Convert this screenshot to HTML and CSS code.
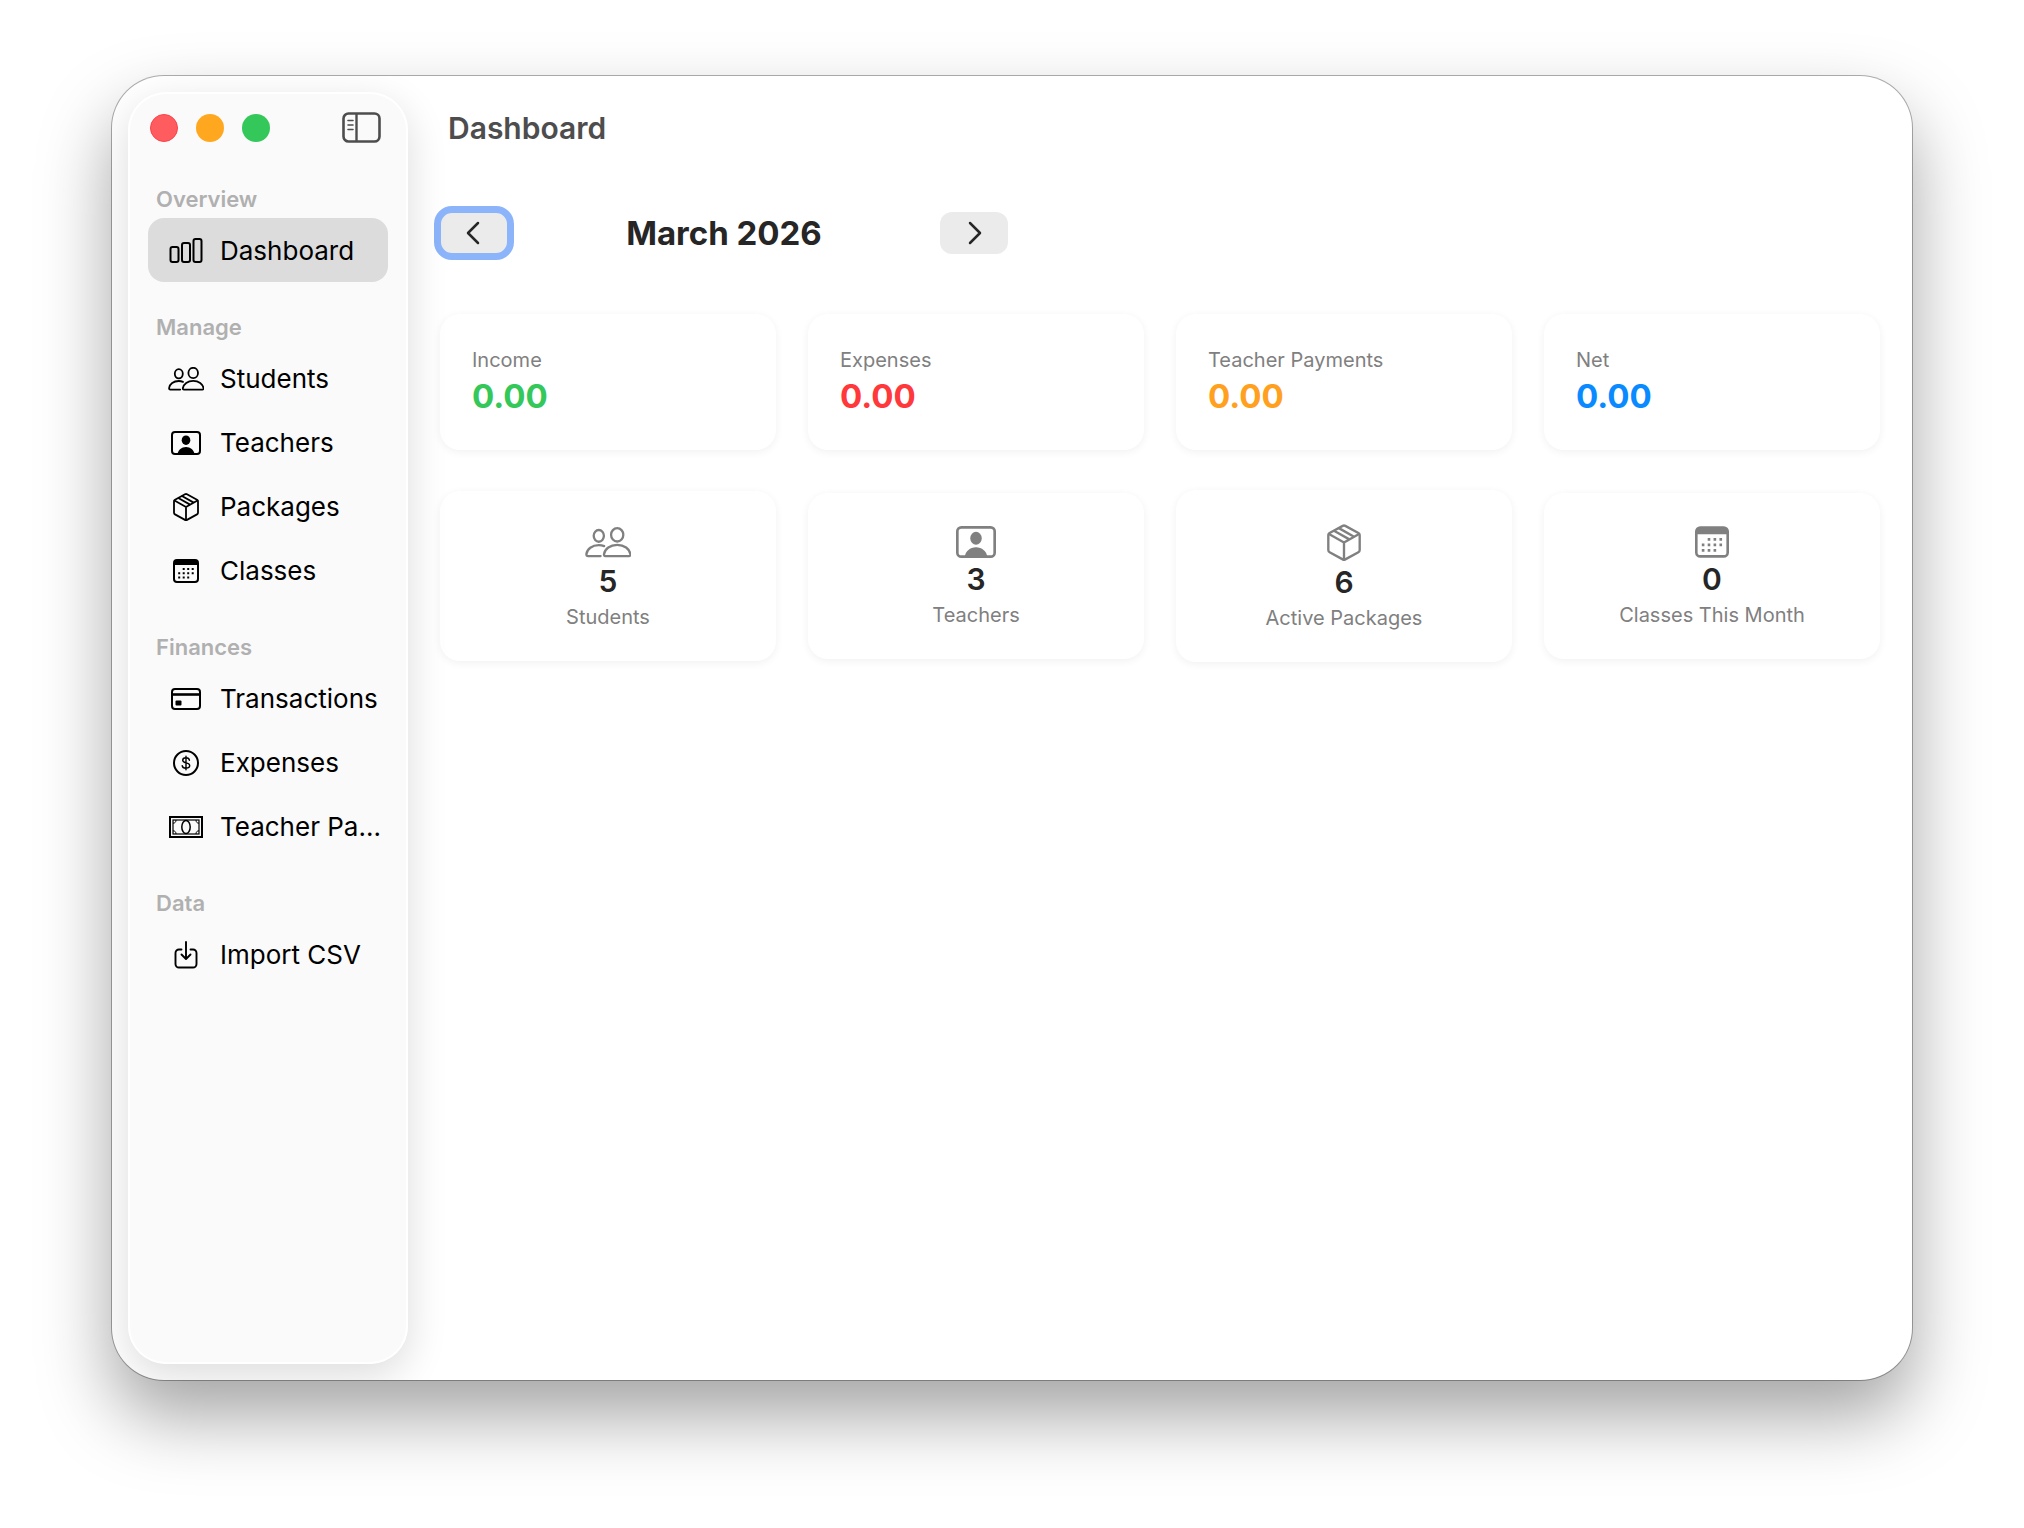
FILE: index.html
```html
<!doctype html>
<html lang="en">
  <head>
    <meta charset="UTF-8" />
    <meta name="viewport" content="width=device-width, initial-scale=1.0" />
    <title>Dashboard</title>
    <link rel="stylesheet" href="styles.css">
  </head>
  <body>
    <!-- shared icons -->
    <svg class="sprite" aria-hidden="true">
      <symbol id="icon-students" viewBox="0 0 36 24">
        <g fill="none" stroke="currentColor" stroke-width="1.8" stroke-linejoin="round" stroke-linecap="round">
          <ellipse cx="10.8" cy="6.8" rx="4" ry="4.6" />
          <ellipse cx="25.2" cy="6" rx="4.8" ry="5.2" />
          <path d="M12.2 22.6H2.4C1.4 22.6 1 22 1.1 21c.5-3.8 4.4-7 9.7-7 1.6 0 3 .3 4.2.8" />
          <path d="M16 22.6h18.4c.9 0 1.3-.6 1.1-1.6-.7-3.9-4.7-7.2-10.3-7.2S15.6 17.1 14.9 21c-.2 1 .2 1.6 1.1 1.6z" />
        </g>
      </symbol>
      <symbol id="icon-teachers" viewBox="0 0 30 24">
        <rect x="1" y="1" width="28" height="22" rx="3" fill="none" stroke="currentColor" stroke-width="2" />
        <ellipse cx="15" cy="9.2" rx="4.300" ry="4.800" fill="currentColor" />
        <path d="M6.500 23c.7-4 4-7 8.500-7s7.800 3 8.500 7z" fill="currentColor" />
      </symbol>
      <symbol id="icon-packages" viewBox="0 0 26 28">
        <g fill="none" stroke="currentColor" stroke-width="1.8" stroke-linejoin="round" stroke-linecap="round">
          <path d="M12 1.300a2 2 0 0 1 2 0l10 5.500a2 2 0 0 1 1 1.700v11.200a2 2 0 0 1-1 1.700l-10 5.500a2 2 0 0 1-2 0L2 21.400a2 2 0 0 1-1-1.700V8.500a2 2 0 0 1 1-1.700z" />
          <path d="M1.500 7.500L13 14l11.500-6.500M13 14v12.800M5.700 5.200l11.400 6.400M9.400 3.200l11.300 6.400" />
        </g>
      </symbol>
      <symbol id="icon-classes" viewBox="0 0 26 24">
        <rect x="1" y="1" width="24" height="22" rx="3" fill="none" stroke="currentColor" stroke-width="2" />
        <path d="M1 6V4a3 3 0 0 1 3-3h18a3 3 0 0 1 3 3v2z" fill="currentColor" />
        <path d="M9.700 10h2M14.200 10h2M18.700 10h2M5.200 14.200h2M9.700 14.200h2M14.200 14.200h2M18.700 14.200h2M5.200 18.400h2M9.700 18.400h2M14.200 18.400h2" stroke="currentColor" stroke-width="2" />
      </symbol>
    </svg>

    <div class="window">
      <aside class="sidebar">
        <div class="titlebar">
          <div class="lights">
            <button class="light red" aria-label="Close"></button>
            <button class="light yellow" aria-label="Minimize"></button>
            <button class="light green" aria-label="Zoom"></button>
          </div>
          <button class="toggle" aria-label="Toggle sidebar">
            <svg width="40" height="32" viewBox="0 0 40 32" fill="none" stroke="currentColor">
              <rect x="1.500" y="1.500" width="36" height="28" rx="5" stroke-width="2.600" />
              <path d="M14.500 2v27" stroke-width="2.400" />
              <path d="M6 8.500h5M6 13h5M6 17.500h5" stroke-width="1.600" stroke-linecap="round" />
            </svg>
          </button>
        </div>

        <nav>
          <h2 class="section">Overview</h2>
          <a class="item active" href="#dashboard">
            <span class="icon">
              <svg width="34" height="26" viewBox="0 0 34 26" fill="none" stroke="currentColor" stroke-width="2">
                <rect x="1.500" y="9" width="8" height="15" rx="2" />
                <rect x="13" y="5" width="8" height="19" rx="2" />
                <rect x="24.500" y="1" width="8" height="23" rx="2" />
              </svg>
            </span>
            <span class="label">Dashboard</span>
          </a>

          <h2 class="section">Manage</h2>
          <a class="item" href="#students">
            <span class="icon"><svg width="36" height="24"><use href="#icon-students" /></svg></span>
            <span class="label">Students</span>
          </a>
          <a class="item" href="#teachers">
            <span class="icon"><svg width="30" height="24"><use href="#icon-teachers" /></svg></span>
            <span class="label">Teachers</span>
          </a>
          <a class="item" href="#packages">
            <span class="icon"><svg width="26" height="28"><use href="#icon-packages" /></svg></span>
            <span class="label">Packages</span>
          </a>
          <a class="item" href="#classes">
            <span class="icon"><svg width="26" height="24"><use href="#icon-classes" /></svg></span>
            <span class="label">Classes</span>
          </a>

          <h2 class="section">Finances</h2>
          <a class="item" href="#transactions">
            <span class="icon">
              <svg width="30" height="22" viewBox="0 0 30 22">
                <rect x="1" y="1" width="28" height="20" rx="3" fill="none" stroke="currentColor" stroke-width="2" />
                <path d="M1 6.500h28" stroke="currentColor" stroke-width="2.600" />
                <rect x="4.500" y="12.500" width="6" height="5" rx="1" fill="currentColor" />
              </svg>
            </span>
            <span class="label">Transactions</span>
          </a>
          <a class="item" href="#expenses">
            <span class="icon">
              <svg width="26" height="26" viewBox="0 0 26 26" fill="none" stroke="currentColor" stroke-linecap="round">
                <circle cx="13" cy="13" r="12" stroke-width="2" />
                <path d="M16.400 10.200c-.2-1.500-1.500-2.400-3.400-2.400s-3.300 1-3.300 2.500c0 3.600 7 1.600 7 5.300 0 1.600-1.500 2.600-3.700 2.600s-3.600-1-3.800-2.600M13 6.300v13.400" stroke-width="1.400" />
              </svg>
            </span>
            <span class="label">Expenses</span>
          </a>
          <a class="item" href="#teacher-payments" title="Teacher Payments">
            <span class="icon">
              <svg width="34" height="22" viewBox="0 0 34 22" fill="none" stroke="currentColor">
                <rect x="1" y="1" width="32" height="20" stroke-width="2" />
                <rect x="4" y="4" width="26" height="14" stroke-width="1.200" />
                <ellipse cx="17" cy="11" rx="4.200" ry="6.500" stroke-width="1.500" />
                <path d="M4 7.200c2 0 3-1.200 3-3.200M30 7.200c-2 0-3-1.200-3-3.200M4 14.800c2 0 3 1.200 3 3.200M30 14.800c-2 0-3 1.200-3 3.200" stroke-width="1" />
              </svg>
            </span>
            <span class="label">Teacher Pa...</span>
          </a>

          <h2 class="section">Data</h2>
          <a class="item" href="#import">
            <span class="icon">
              <svg width="24" height="28" viewBox="0 0 24 28" fill="none" stroke="currentColor" stroke-width="1.900" stroke-linecap="round" stroke-linejoin="round">
                <path d="M7.500 8.500H5a3.500 3.500 0 0 0-3.500 3.500v11A3.500 3.500 0 0 0 5 26.500h14a3.500 3.500 0 0 0 3.500-3.500V12A3.500 3.500 0 0 0 19 8.500h-2.500" />
                <path d="M12 1v16.500M7.500 13.500l4.500 4.500 4.500-4.500" />
              </svg>
            </span>
            <span class="label">Import CSV</span>
          </a>
        </nav>
      </aside>

      <main class="main">
        <header class="header">
          <h1>Dashboard</h1>
        </header>

        <div class="content">
          <div class="month">
            <button class="month-btn focused" aria-label="Previous month">
              <svg width="16" height="24" viewBox="0 0 16 24"><path d="M12 2L2 12l10 10" /></svg>
            </button>
            <h2>March 2026</h2>
            <button class="month-btn" aria-label="Next month">
              <svg width="16" height="24" viewBox="0 0 16 24"><path d="M4 2l10 10L4 22" /></svg>
            </button>
          </div>

          <div class="cards">
            <div class="card">
              <div class="caption">Income</div>
              <div class="amount income">0.00</div>
            </div>
            <div class="card">
              <div class="caption">Expenses</div>
              <div class="amount expenses">0.00</div>
            </div>
            <div class="card">
              <div class="caption">Teacher Payments</div>
              <div class="amount payments">0.00</div>
            </div>
            <div class="card">
              <div class="caption">Net</div>
              <div class="amount net">0.00</div>
            </div>
          </div>

          <div class="cards">
            <div class="card stat">
              <svg width="46" height="38"><use href="#icon-students" y="4" width="46" height="31" /></svg>
              <div class="count">5</div>
              <div class="name">Students</div>
            </div>
            <div class="card stat">
              <svg width="40" height="34"><use href="#icon-teachers" y="1" width="40" height="32" /></svg>
              <div class="count">3</div>
              <div class="name">Teachers</div>
            </div>
            <div class="card stat">
              <svg width="34" height="40"><use href="#icon-packages" y="2" width="34" height="37" /></svg>
              <div class="count">6</div>
              <div class="name">Active Packages</div>
            </div>
            <div class="card stat">
              <svg width="34" height="34"><use href="#icon-classes" y="1" width="34" height="32" /></svg>
              <div class="count">0</div>
              <div class="name">Classes This Month</div>
            </div>
          </div>
        </div>
      </main>
    </div>
  </body>
</html>
```
FILE: styles.css
```css
* {
  box-sizing: border-box;
}
body {
  margin: 0;
  min-height: 100vh;
  padding: 76px 112px 148px;
  display: flex;
  background: #fff;
  color: #262626;
  font-family: Inter, "Liberation Sans", sans-serif;
}
h1, h2 {
  margin: 0;
}
button {
  padding: 0;
  border: none;
  background: none;
  color: inherit;
  font: inherit;
}
svg {
  display: block;
}
.sprite {
  position: absolute;
  width: 0;
  height: 0;
}

.window {
  flex: 1;
  display: flex;
  padding: 16px;
  border-radius: 52px;
  background: #fff;
  overflow: hidden;
  box-shadow: 0 0 0 1px rgba(0, 0, 0, 0.3), 0 36px 72px rgba(0, 0, 0, 0.36);
}

/* sidebar */
.sidebar {
  position: relative;
  z-index: 1;
  flex: 0 0 280px;
  min-width: 0;
  padding: 0 20px;
  border-radius: 38px;
  background: #fafafa;
  box-shadow: inset 0 0 0 2px #fff, 0 12px 40px rgba(0, 0, 0, 0.14);
}
.titlebar {
  display: flex;
  align-items: center;
  justify-content: space-between;
  height: 72px;
  margin-bottom: 16px;
  padding: 0 6px 0 2px;
}
.lights {
  display: flex;
  gap: 18px;
}
.light {
  width: 28px;
  height: 28px;
  border-radius: 50%;
}
.red {
  background: #ff5c60;
  border: 1px solid #fb4248;
}
.yellow {
  background: #ffa81f;
}
.green {
  background: #34c759;
}
.toggle {
  color: #4d4d4d;
}
.section {
  padding-left: 8px;
  color: #b0b0b0;
  font-size: 22px;
  font-weight: 600;
  line-height: 38px;
}
.item + .section {
  margin-top: 26px;
}
.item {
  display: flex;
  align-items: center;
  gap: 16px;
  height: 64px;
  padding: 0 4px 0 20px;
  border-radius: 16px;
  color: #000;
  font-size: 26px;
  text-decoration: none;
}
.active {
  background: #dcdcdc;
}
.icon {
  flex: 0 0 36px;
  display: flex;
  justify-content: center;
  padding-top: 2px;
}
.label {
  overflow: hidden;
  white-space: nowrap;
  text-overflow: ellipsis;
}

/* main area */
.main {
  flex: 1;
  min-width: 0;
  padding: 0 16px 0 32px;
}
.header {
  display: flex;
  align-items: center;
  height: 72px;
  margin-bottom: 48px;
  padding-left: 8px;
}
.header h1 {
  color: #4d4d4d;
  font-size: 30px;
  font-weight: 600;
}
.content {
  display: flex;
  flex-direction: column;
  gap: 40px;
}
.month {
  display: flex;
  align-items: center;
  justify-content: space-between;
  max-width: 568px;
  margin-bottom: 20px;
}
.month h2 {
  font-size: 33px;
  font-weight: 700;
  line-height: 42px;
}
.month-btn {
  display: flex;
  align-items: center;
  justify-content: center;
  width: 68px;
  height: 42px;
  border-radius: 12px;
  background: #ebebeb;
}
.month-btn path {
  fill: none;
  stroke: currentColor;
  stroke-width: 2.5;
  stroke-linecap: round;
  stroke-linejoin: round;
}
.focused {
  outline: 7px solid #8cb4fa;
  outline-offset: -1px;
}
.cards {
  display: grid;
  grid-template-columns: repeat(4, 1fr);
  align-items: center;
  gap: 32px;
}
.card {
  padding: 32px;
  border-radius: 20px;
  background: #fff;
  box-shadow: 0 2px 8px rgba(0, 0, 0, 0.06);
}
.caption {
  color: #808080;
  font-size: 20px;
  line-height: 28px;
}
.amount {
  font-size: 33px;
  font-weight: 700;
  line-height: 44px;
}
.income {
  color: #34c759;
}
.expenses {
  color: #ff383c;
}
.payments {
  color: #ffa01f;
}
.net {
  color: #0a8aff;
}
.stat {
  display: flex;
  flex-direction: column;
  align-items: center;
}
.stat svg {
  color: #808080;
}
.count {
  margin: 4px 0 8px;
  font-size: 30px;
  font-weight: 600;
  line-height: 32px;
}
.name {
  color: #808080;
  font-size: 20px;
  line-height: 24px;
}
```
